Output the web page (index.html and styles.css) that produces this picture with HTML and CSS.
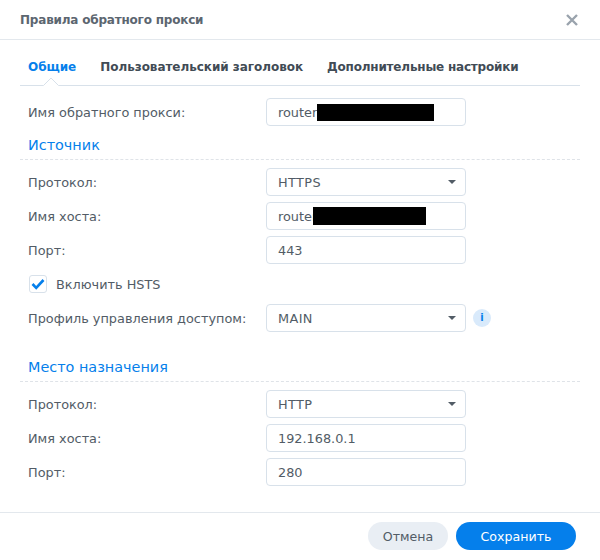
FILE: index.html
```html
<!DOCTYPE html>
<html lang="ru">
<head>
    <meta charset="UTF-8">
    <title>Правила обратного прокси</title>
    <link rel="stylesheet" href="styles.css">
</head>
<body>
    <div class="dialog">
        <div class="header">
            <span class="title">Правила обратного прокси</span>
            <svg class="close" width="12" height="12" viewBox="0 0 12 12"><path d="M1 1L11 11M11 1L1 11" stroke="#9aa3ad" stroke-width="2.4" fill="none"/></svg>
        </div>
        <div class="tabs">
            <span class="tab active">Общие</span>
            <span class="tab">Пользовательский заголовок</span>
            <span class="tab tab-last">Дополнительные настройки</span>
            <svg class="tab-arrow" width="16" height="8" viewBox="0 0 16 8"><path d="M0 8L8 0L16 8" fill="#fff" stroke="#d8e1ea"/><path d="M0 8H16" stroke="#fff" stroke-width="1.5" transform="translate(0 .5)"/></svg>
        </div>
        <div class="content">
            <div class="row">
                <label>Имя обратного прокси:</label>
                <div class="field">router<span class="redact redact-name"></span></div>
            </div>

            <div class="section">Источник</div>
            <div class="row">
                <label>Протокол:</label>
                <div class="field select">HTTPS<i class="caret"></i></div>
            </div>
            <div class="row">
                <label>Имя хоста:</label>
                <div class="field">router<span class="redact redact-host"></span></div>
            </div>
            <div class="row">
                <label>Порт:</label>
                <div class="field">443</div>
            </div>
            <div class="check-row">
                <span class="checkbox">
                    <svg width="14" height="12" viewBox="0 0 14 12"><path d="M1.5 6L5.2 9.8L12.5 2" stroke="#057feb" stroke-width="2.6" fill="none"/></svg>
                </span>
                <span>Включить HSTS</span>
            </div>
            <div class="row">
                <label>Профиль управления доступом:</label>
                <div class="field select">MAIN<i class="caret"></i></div>
                <span class="info">i</span>
            </div>

            <div class="section section-dest">Место назначения</div>
            <div class="row">
                <label>Протокол:</label>
                <div class="field select">HTTP<i class="caret"></i></div>
            </div>
            <div class="row">
                <label>Имя хоста:</label>
                <div class="field">192.168.0.1</div>
            </div>
            <div class="row">
                <label>Порт:</label>
                <div class="field">280</div>
            </div>
        </div>
        <div class="footer">
            <button class="btn cancel">Отмена</button>
            <button class="btn save">Сохранить</button>
        </div>
    </div>
</body>
</html>
```

FILE: styles.css
```css
body, html {
    margin: 0;
    padding: 0;
    height: 100%;
    background-color: #fff;
    font-family: 'DejaVu Sans', sans-serif;
    font-size: 12.85px;
    color: #525c66;
    overflow: hidden;
}
.dialog {
    display: flex;
    flex-direction: column;
    height: 560px;
}
.header {
    height: 39px;
    box-sizing: content-box;
    border-bottom: 1px solid #e3e8ed;
    padding: 0 22px 0 20px;
    display: flex;
    align-items: center;
    justify-content: space-between;
}
.title {
    font-size: 12px;
    letter-spacing: -0.2px;
    font-weight: bold;
    color: #5c6670;
}
.tabs {
    position: relative;
    margin: 0 20px;
    height: 46px;
    border-bottom: 1px solid #d8e1ea;
    padding: 9px 0 0 8px;
    display: flex;
    align-items: center;
    gap: 24px;
    box-sizing: border-box;
}
.tab {
    font-size: 12px;
    letter-spacing: -0.04px;
    font-weight: bold;
    color: #414b55;
}
.tab.active {
    color: #057feb;
}
.tab-last {
    letter-spacing: -0.2px;
}
.tab-arrow {
    position: absolute;
    left: 23px;
    bottom: -1px;
}
.content {
    flex: 1;
    padding: 12px 20px 0;
    display: flex;
    flex-direction: column;
    gap: 6px;
}
.row {
    display: flex;
    align-items: center;
    height: 28px;
    padding-left: 8px;
}
.row label {
    width: 238px;
    flex: none;
}
.field {
    position: relative;
    width: 200px;
    height: 28px;
    box-sizing: border-box;
    border: 1px solid #d8e1ea;
    border-radius: 4px;
    padding: 0 11px;
    line-height: 27px;
    color: #525c66;
}
.select {
    letter-spacing: 0.4px;
}
.redact {
    position: absolute;
    background-color: #000;
}
.redact-name {
    left: 50px;
    top: 5px;
    width: 117px;
    height: 17px;
}
.redact-host {
    left: 46px;
    top: 4px;
    width: 113px;
    height: 18px;
}
.caret {
    position: absolute;
    right: 9px;
    top: 11px;
    border-left: 4.5px solid transparent;
    border-right: 4.5px solid transparent;
    border-top: 4.5px solid #525c66;
}
.info {
    width: 18px;
    height: 18px;
    margin-left: 7px;
    border-radius: 50%;
    background-color: #d9eafb;
    color: #057feb;
    font-weight: bold;
    font-size: 10px;
    line-height: 18px;
    text-align: center;
}
.section {
    height: 29px;
    box-sizing: border-box;
    margin-top: -1px;
    margin-bottom: 2px;
    padding: 4px 0 0 8px;
    font-size: 14.4px;
    line-height: 20px;
    color: #057feb;
    border-bottom: 1px dashed #dfe3e8;
}
.section-dest {
    margin-top: 15px;
}
.check-row {
    display: flex;
    align-items: center;
    gap: 9px;
    height: 28px;
    padding-left: 9px;
}
.checkbox {
    width: 16px;
    height: 16px;
    border: 1px solid #d8e1ea;
    border-radius: 3px;
    display: flex;
    align-items: center;
    justify-content: center;
}
.footer {
    height: 48px;
    border-top: 1px solid #e3e8ed;
    padding-right: 24px;
    display: flex;
    align-items: flex-start;
    justify-content: flex-end;
    gap: 8px;
    padding-top: 9px;
    box-sizing: border-box;
}
.btn {
    height: 28px;
    border: none;
    border-radius: 14px;
    font-family: inherit;
    font-size: 12.6px;
    padding: 0;
}
.cancel {
    width: 80px;
    background-color: #e9eef4;
    color: #525c66;
}
.save {
    width: 120px;
    background-color: #057feb;
    color: #fff;
}
```
